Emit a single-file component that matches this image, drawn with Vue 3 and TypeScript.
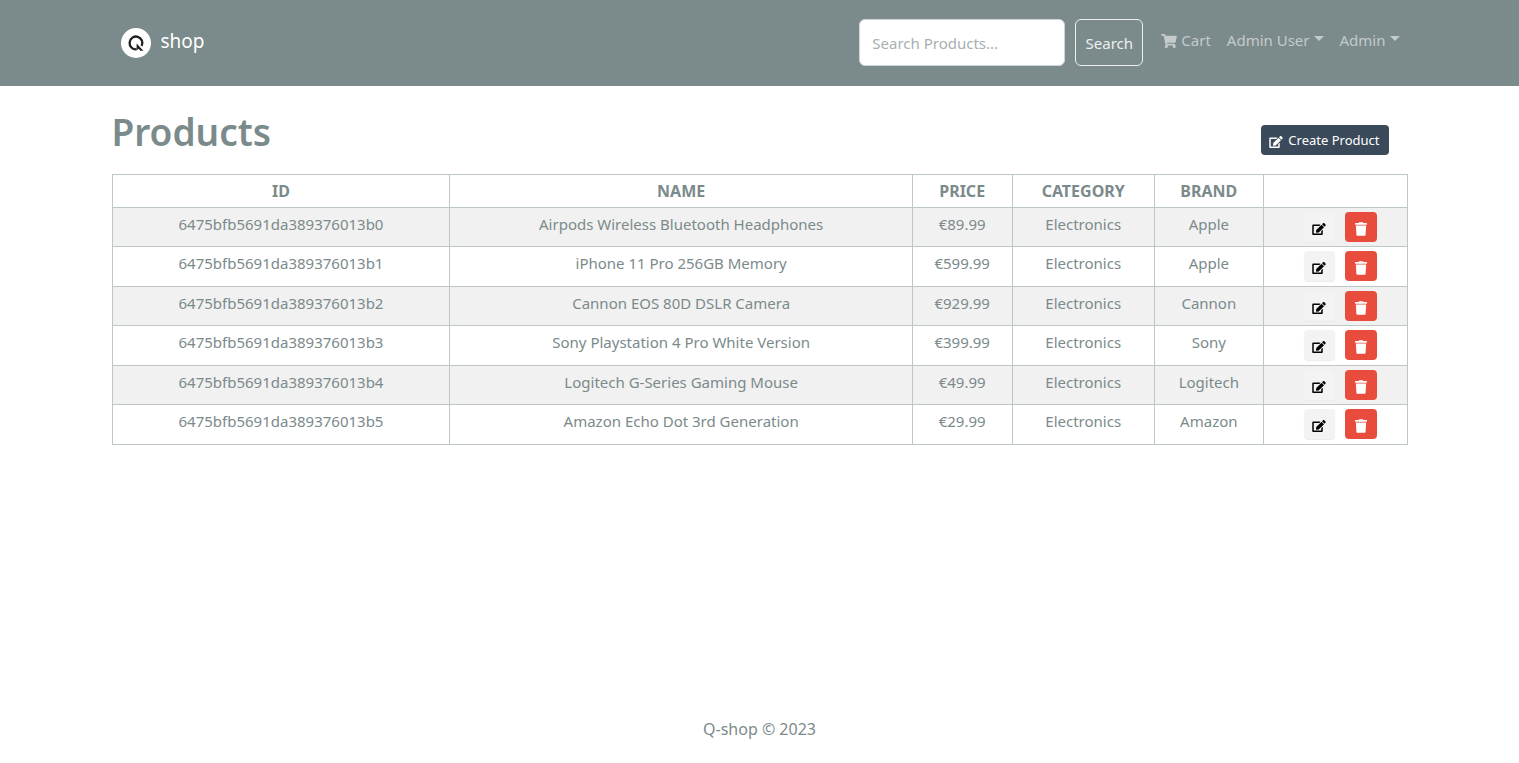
<script setup lang="ts">
import { ref } from 'vue'

interface Product {
  id: string
  name: string
  price: string
  category: string
  brand: string
}

const keyword = ref('')

const products: Product[] = [
  { id: '6475bfb5691da389376013b0', name: 'Airpods Wireless Bluetooth Headphones', price: '€89.99', category: 'Electronics', brand: 'Apple' },
  { id: '6475bfb5691da389376013b1', name: 'iPhone 11 Pro 256GB Memory', price: '€599.99', category: 'Electronics', brand: 'Apple' },
  { id: '6475bfb5691da389376013b2', name: 'Cannon EOS 80D DSLR Camera', price: '€929.99', category: 'Electronics', brand: 'Cannon' },
  { id: '6475bfb5691da389376013b3', name: 'Sony Playstation 4 Pro White Version', price: '€399.99', category: 'Electronics', brand: 'Sony' },
  { id: '6475bfb5691da389376013b4', name: 'Logitech G-Series Gaming Mouse', price: '€49.99', category: 'Electronics', brand: 'Logitech' },
  { id: '6475bfb5691da389376013b5', name: 'Amazon Echo Dot 3rd Generation', price: '€29.99', category: 'Electronics', brand: 'Amazon' },
]

const editPath =
  'M402.6 83.2l90.2 90.2c3.8 3.8 3.8 10 0 13.8L274.4 405.6l-92.8 10.3c-12.4 1.4-22.9-9.1-21.5-21.5l10.3-92.8L388.8 83.2c3.8-3.8 10-3.8 13.8 0zm162-22.9l-48.8-48.8c-15.2-15.2-39.9-15.2-55.2 0l-35.4 35.4c-3.8 3.8-3.8 10 0 13.8l90.2 90.2c3.8 3.8 10 3.8 13.8 0l35.4-35.4c15.2-15.3 15.2-40 0-55.2zM384 346.2V448H64V128h229.8c3.2 0 6.2-1.3 8.5-3.5l40-40c7.6-7.6 2.2-20.5-8.5-20.5H48C21.5 64 0 85.5 0 112v352c0 26.5 21.5 48 48 48h352c26.5 0 48-21.5 48-48V306.2c0-10.7-12.9-16-20.5-8.5l-40 40c-2.2 2.3-3.5 5.3-3.5 8.5z'
const trashPath =
  'M432 32H312l-9.4-18.7A24 24 0 0 0 281.1 0H166.8a23.72 23.72 0 0 0-21.4 13.3L136 32H16A16 16 0 0 0 0 48v32a16 16 0 0 0 16 16h416a16 16 0 0 0 16-16V48a16 16 0 0 0-16-16zM53.2 467a48 48 0 0 0 47.9 45h245.8a48 48 0 0 0 47.9-45L416 128H32z'
const cartPath =
  'M528.12 301.319l47.273-208C578.806 78.301 567.391 64 551.99 64H159.208l-9.166-44.81C147.758 8.021 137.93 0 126.529 0H24C10.745 0 0 10.745 0 24v16c0 13.255 10.745 24 24 24h69.883l70.248 343.435C147.325 417.1 136 435.222 136 456c0 30.928 25.072 56 56 56s56-25.072 56-56c0-15.674-6.447-29.835-16.824-40h209.647C430.447 426.165 424 440.326 424 456c0 30.928 25.072 56 56 56s56-25.072 56-56c0-22.172-12.888-41.332-31.579-50.405l5.517-24.276c3.413-15.018-8.002-29.319-23.403-29.319H218.117l-6.545-32h293.145c11.206 0 20.92-7.754 23.403-18.681z'
</script>

<template>
  <div class="page">
    <header class="navbar">
      <div class="container bar">
        <a class="brand" href="#">
          <svg class="logo" viewBox="0 0 30 30" aria-hidden="true">
            <circle cx="15" cy="15" r="15" fill="#fff" />
            <path d="M15.6 21.3A6.4 6.4 0 1 1 20.6 18" fill="none" stroke="#231f20" stroke-width="2.3" />
            <path d="M15.6 15.6L22.4 22.8H19.4L17.6 20.8L15.6 22.2Z" fill="#231f20" />
          </svg>
          <span>shop</span>
        </a>
        <div class="menu">
          <form class="search" role="search" @submit.prevent>
            <input v-model="keyword" type="text" placeholder="Search Products..." aria-label="Search Products" />
            <button type="submit">Search</button>
          </form>
          <nav class="links">
            <a href="#">
              <svg class="cart" viewBox="0 0 576 512" aria-hidden="true"><path :d="cartPath" /></svg>
              Cart
            </a>
            <a class="dropdown" href="#">Admin User</a>
            <a class="dropdown" href="#">Admin</a>
          </nav>
        </div>
      </div>
    </header>

    <main class="container content">
      <div class="heading">
        <h1>Products</h1>
        <button class="create" type="button">
          <svg class="icon-edit" viewBox="0 0 576 512" aria-hidden="true"><path :d="editPath" /></svg>
          Create Product
        </button>
      </div>

      <table>
        <colgroup>
          <col class="col-id" />
          <col class="col-name" />
          <col class="col-price" />
          <col class="col-category" />
          <col class="col-brand" />
          <col />
        </colgroup>
        <thead>
          <tr>
            <th>ID</th>
            <th>NAME</th>
            <th>PRICE</th>
            <th>CATEGORY</th>
            <th>BRAND</th>
            <th></th>
          </tr>
        </thead>
        <tbody>
          <tr v-for="p in products" :key="p.id">
            <td>{{ p.id }}</td>
            <td>{{ p.name }}</td>
            <td>{{ p.price }}</td>
            <td>{{ p.category }}</td>
            <td>{{ p.brand }}</td>
            <td>
              <div class="actions">
                <button class="edit" type="button" :aria-label="`Edit ${p.name}`">
                  <svg class="icon-edit" viewBox="0 0 576 512" aria-hidden="true"><path :d="editPath" /></svg>
                </button>
                <button class="delete" type="button" :aria-label="`Delete ${p.name}`">
                  <svg class="icon-trash" viewBox="0 0 448 512" aria-hidden="true"><path :d="trashPath" /></svg>
                </button>
              </div>
            </td>
          </tr>
        </tbody>
      </table>
    </main>

    <footer>Q-shop © 2023</footer>
  </div>
</template>

<style>
body {
  margin: 0;
  background: #fff;
}
</style>

<style scoped>
.page {
  display: flex;
  flex-direction: column;
  min-height: 100vh;
  color: #7b8a8b;
  font-family: "Segoe UI", "Noto Sans", "Open Sans", sans-serif;
  font-size: 15px;
  line-height: 24px;
}

.container {
  box-sizing: border-box;
  width: 100%;
  max-width: 1320px;
  margin: 0 auto;
  padding: 0 12px;
}

button,
input {
  box-sizing: border-box;
  margin: 0;
  font: inherit;
}

svg {
  display: block;
  flex: none;
  fill: currentColor;
}

.navbar {
  background: #7b8a8b;
}

.bar {
  display: flex;
  justify-content: space-between;
  align-items: center;
  height: 86px;
  padding: 0 20px;
}

.brand {
  display: flex;
  align-items: center;
  gap: 10px;
  padding-left: 1px;
  color: #fff;
  font-size: 19px;
  text-decoration: none;
}

.brand span {
  padding-bottom: 4px;
}

.logo {
  width: 30px;
  height: 30px;
}

.menu {
  display: flex;
  align-items: center;
  gap: 18px;
  padding-bottom: 2px;
}

.search {
  display: flex;
  gap: 10px;
}

.search input {
  width: 206px;
  height: 47px;
  padding: 2px 12px 0;
  border: 1px solid #ced4da;
  border-radius: 6px;
  background: #fff;
  color: #7b8a8b;
}

.search input::placeholder {
  color: #a6b0b0;
  opacity: 1;
}

.search button {
  width: 68px;
  padding: 2px 0 0;
  border: 1px solid #ecf0f1;
  border-radius: 6px;
  background: transparent;
  color: #ecf0f1;
}

.links {
  display: flex;
  gap: 16px;
  padding-bottom: 5px;
}

.links a {
  display: flex;
  align-items: center;
  gap: 4px;
  color: #c4cbcb;
  text-decoration: none;
}

.cart {
  width: 16px;
  height: 14px;
  margin-top: 3px;
}

.dropdown::after {
  content: "";
  margin-bottom: 2px;
  border: 5px solid transparent;
  border-top-color: currentColor;
  border-bottom: 0;
}

.content {
  flex: 1;
}

.heading {
  display: flex;
  justify-content: space-between;
  align-items: flex-end;
  padding: 22px 19px 19px 0;
}

h1 {
  margin: 0;
  font-size: 37px;
  font-weight: 600;
  line-height: 47px;
}

.create {
  display: flex;
  align-items: center;
  gap: 5px;
  height: 30px;
  padding: 0 9px 0 8px;
  border: 0;
  border-radius: 4px;
  background: #3b4a5a;
  color: #fff;
  font-size: 13px;
}

.icon-edit {
  width: 14px;
  height: 12px;
  margin-top: 4px;
}

.icon-trash {
  width: 12px;
  height: 14px;
  margin-top: 4px;
}

table {
  width: 100%;
  border-collapse: collapse;
  table-layout: fixed;
}

.col-id { width: 26.1%; }
.col-name { width: 35.7%; }
.col-price { width: 7.7%; }
.col-category { width: 11%; }
.col-brand { width: 8.4%; }

th,
td {
  border: 1px solid #bdc7c7;
  padding: 4px;
  text-align: center;
  vertical-align: top;
}

th {
  font-size: 16px;
}

tr {
  height: 39px;
}

thead tr {
  height: 33px;
}

tbody tr:nth-child(odd) {
  background: #f1f1f1;
}

tbody tr:nth-child(even) {
  height: 40px;
}

.actions {
  display: flex;
  justify-content: center;
  gap: 10px;
  padding-left: 10px;
}

.actions button {
  display: flex;
  align-items: center;
  justify-content: center;
  width: 32px;
  height: 30px;
  padding: 0;
  border: 0;
  border-radius: 4px;
}

.actions .edit {
  width: 31px;
  background: #f3f3f3;
  color: #000;
  box-shadow: 0 1px 1px #ebebeb;
}

.actions .delete {
  background: #e74c3c;
  color: #fff;
}

footer {
  padding: 16px 0 22px;
  font-size: 16px;
  text-align: center;
}
</style>
